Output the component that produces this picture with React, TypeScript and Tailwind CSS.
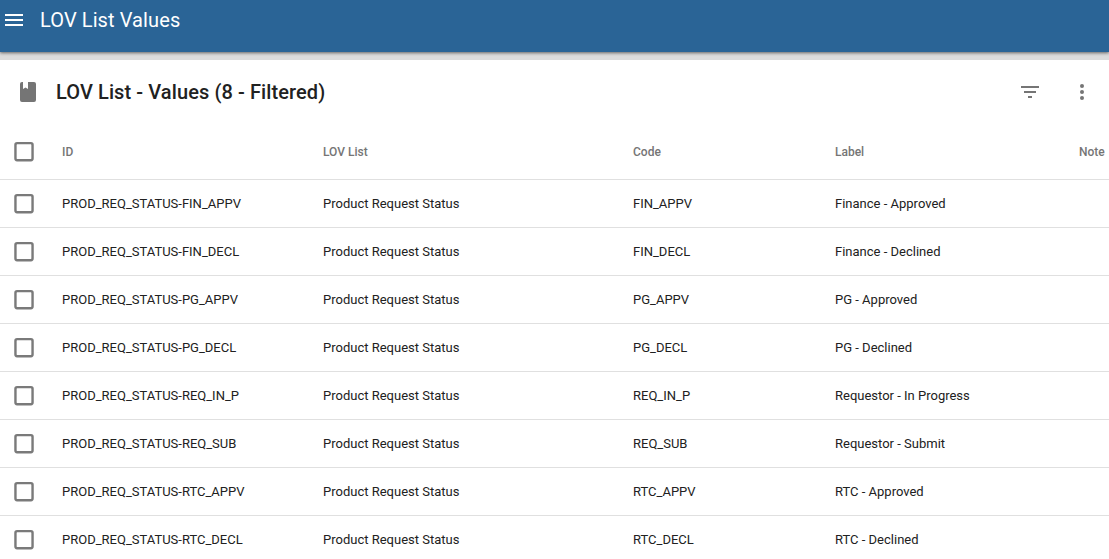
const rows = [
  ["PROD_REQ_STATUS-FIN_APPV", "FIN_APPV", "Finance - Approved"],
  ["PROD_REQ_STATUS-FIN_DECL", "FIN_DECL", "Finance - Declined"],
  ["PROD_REQ_STATUS-PG_APPV", "PG_APPV", "PG - Approved"],
  ["PROD_REQ_STATUS-PG_DECL", "PG_DECL", "PG - Declined"],
  ["PROD_REQ_STATUS-REQ_IN_P", "REQ_IN_P", "Requestor - In Progress"],
  ["PROD_REQ_STATUS-REQ_SUB", "REQ_SUB", "Requestor - Submit"],
  ["PROD_REQ_STATUS-RTC_APPV", "RTC_APPV", "RTC - Approved"],
  ["PROD_REQ_STATUS-RTC_DECL", "RTC_DECL", "RTC - Declined"],
];

function Box() {
  return (
    <svg width="24" height="24" viewBox="0 0 24 24" className="block shrink-0" fill="none">
      <rect x="3.45" y="3.1" width="17.1" height="17.1" rx="1.6" stroke="#7a7a7a" strokeWidth="2.4" />
    </svg>
  );
}

export default function App() {
  return (
    <div className="h-[559px] w-[1109px] overflow-hidden bg-white font-['Roboto',sans-serif]">
      <header className="relative flex h-[52px] items-start bg-[#2a6496] pl-[5px] pt-[8px] text-white shadow-[0_1px_3px_rgba(0,0,0,0.55)]">
        <svg width="18" height="24" viewBox="0 0 18 24" fill="white">
          <path d="M0 6h18v2H0zM0 11h18v2H0zM0 16h18v2H0z" />
        </svg>
        <h1 className="ml-[17px] text-[20px] leading-[24px] font-normal tracking-[0.1px]">LOV List Values</h1>
      </header>
      <div className="h-[8px] bg-[#dcdcdc]" />
      <section className="flex h-[64px] items-center pl-[16px] pr-[15px]">
        <svg width="24" height="24" viewBox="0 0 24 24" fill="#757575">
          <path d="M7 2H6a2 2 0 0 0-2 2v16a2 2 0 0 0 2 2h12a2 2 0 0 0 2-2V4a2 2 0 0 0-2-2h-6v7L9.500 7.500 7 9z" />
        </svg>
        <h2 className="ml-[16px] text-[20px] leading-[24px] font-medium tracking-[0.1px] text-[#212121]">LOV List - Values (8 - Filtered)</h2>
        <div className="ml-auto flex items-center gap-[28px]">
          <svg width="24" height="24" viewBox="0 0 24 24" fill="#757575">
            <path d="M3 6h18v2H3zM6 11h12v2H6zM10 16h4v2h-4z" />
          </svg>
          <svg width="24" height="24" viewBox="0 0 24 24" fill="#757575">
            <circle cx="12" cy="6" r="2" />
            <circle cx="12" cy="12" r="2" />
            <circle cx="12" cy="18" r="2" />
          </svg>
        </div>
      </section>
      <div className="flex h-[56px] items-center border-b border-[#e0e0e0] pl-[12px] text-[12px] font-medium text-[#757575]">
        <Box />
        <div className="ml-[26px] w-[261px]">ID</div>
        <div className="w-[310px]">LOV List</div>
        <div className="w-[202px]">Code</div>
        <div className="w-[244px]">Label</div>
        <div>Note</div>
      </div>
      {rows.map((r) => (
        <div key={r[0]} className="flex h-[48px] items-center border-b border-[#e0e0e0] pl-[12px] text-[13px] text-[#212121]">
          <Box />
          <div className="ml-[26px] w-[261px]">{r[0]}</div>
          <div className="w-[310px]">Product Request Status</div>
          <div className="w-[202px]">{r[1]}</div>
          <div className="w-[244px]">{r[2]}</div>
        </div>
      ))}
    </div>
  );
}
